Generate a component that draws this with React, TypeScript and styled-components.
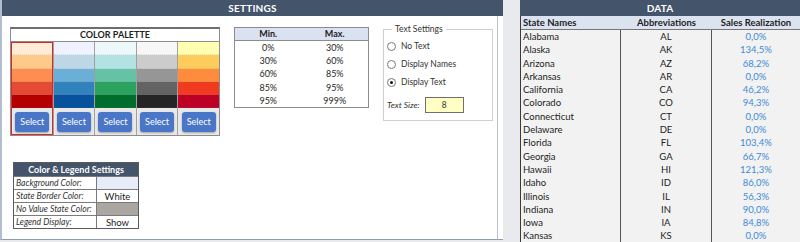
import React from 'react';
import styled, { createGlobalStyle } from 'styled-components';

const GlobalStyle = createGlobalStyle`
  html, body {
    margin: 0;
    padding: 0;
    background: #e8eaee;
    font-family: Lato, "Open Sans", sans-serif;
    color: #1e1e1e;
  }
`;

const Page = styled.div`
  display: flex;
  width: 800px;
  height: 242px;
  overflow: hidden;
`;

const SettingsPanel = styled.section`
  width: 503px;
  height: 240px;
  background: #fff;
  border-left: 2px solid #b3bdd0;
  border-bottom: 1px solid #8e9bb5;
  box-sizing: border-box;
  display: flex;
  flex-direction: column;
`;

const PanelHeader = styled.div`
  height: 16px;
  background: #44546a;
  color: #fff;
  font-weight: 700;
  font-size: 10px;
  line-height: 16px;
  text-align: center;
  letter-spacing: 0.2px;
`;

const SettingsBody = styled.div`
  flex: 1;
  border-right: 1px solid #b9c2d3;
  margin-right: 5px;
  display: flex;
  flex-direction: column;
  padding: 13px 0 0 8px;
  gap: 26px;
`;

const TopRow = styled.div`
  display: flex;
  align-items: flex-start;
`;

const PaletteTable = styled.div`
  width: 208px;
  border: 1px solid #8c8c8c;
  border-top: 2px solid #6e6e6e;
  display: grid;
  grid-template-columns: repeat(5, 1fr);
  margin-top: -2px;
`;

const PaletteTitle = styled.div`
  grid-column: 1 / -1;
  height: 12px;
  line-height: 12px;
  font-size: 9px;
  font-weight: 700;
  text-align: center;
  border-bottom: 1px solid #8c8c8c;
`;

const PaletteColumn = styled.div<{ $selected?: boolean }>`
  display: flex;
  flex-direction: column;
  border-left: 1px solid #a0a0a0;
  outline: ${p => (p.$selected ? '1.5px solid #d9262b' : 'none')};
  outline-offset: -1px;
  position: relative;
  z-index: ${p => (p.$selected ? 1 : 0)};
  &:first-child {
    border-left: none;
  }
`;

const Swatch = styled.div<{ $color: string }>`
  height: 13.3px;
  background: ${p => p.$color};
  border-bottom: 1px dotted rgba(120, 120, 120, 0.2);
  box-sizing: border-box;
`;

const ButtonCell = styled.div`
  height: 27px;
  background: #e9e9e9;
  display: flex;
  align-items: center;
  justify-content: center;
`;

const SelectButton = styled.button`
  width: 34px;
  height: 20px;
  border: none;
  border-radius: 3px;
  background: #4a76c8;
  color: #fff;
  font-family: Lato, sans-serif;
  font-size: 9px;
  padding: 0;
  box-shadow: 0 1px 2px rgba(0, 0, 0, 0.3);
`;

const RangeTable = styled.div`
  margin-left: 14px;
  width: 133px;
  border: 1px solid #8c8c8c;
  display: grid;
  grid-template-columns: 1fr 1fr;
  margin-top: -2px;
`;

const RangeHead = styled.div`
  height: 12px;
  line-height: 12px;
  background: #dae2f1;
  font-size: 9px;
  font-weight: 700;
  text-align: center;
  border-bottom: 1px solid #8c8c8c;
`;

const RangeCell = styled.div`
  height: 13.2px;
  line-height: 13.2px;
  font-size: 9px;
  text-align: center;
`;

const TextSettings = styled.fieldset`
  margin: -5px 0 0 14px;
  width: 110px;
  height: 97px;
  box-sizing: border-box;
  border: 1px solid #cfcfcf;
  padding: 3px 0 0 3px;
  display: flex;
  flex-direction: column;
  font-size: 8.5px;
  color: #333;
`;

const Legend = styled.legend`
  padding: 0 3px;
  margin-left: 5px;
  font-size: 8.5px;
`;

const RadioRow = styled.label`
  display: flex;
  align-items: center;
  gap: 5px;
  height: 18px;
`;

const Radio = styled.span<{ $checked?: boolean }>`
  width: 7px;
  height: 7px;
  border-radius: 50%;
  border: 1px solid #777;
  background: #fff;
  display: flex;
  align-items: center;
  justify-content: center;
  &::after {
    content: '';
    width: 3px;
    height: 3px;
    border-radius: 50%;
    background: ${p => (p.$checked ? '#111' : 'transparent')};
  }
`;

const SizeRow = styled.div`
  display: flex;
  align-items: center;
  gap: 5px;
  margin-top: 6px;
  font-style: italic;
`;

const SizeBox = styled.div`
  width: 37px;
  height: 14px;
  background: #ffffc4;
  border: 1px solid #6f6f6f;
  font-style: normal;
  text-align: center;
  line-height: 14px;
`;

const LegendTable = styled.div`
  width: 124px;
  margin-left: 3px;
  border: 1px solid #5a5a5a;
  display: grid;
  grid-template-columns: 83px 1fr;
  font-size: 9px;
`;

const LegendHead = styled.div`
  grid-column: 1 / -1;
  height: 13px;
  line-height: 13px;
  background: #44546a;
  color: #fff;
  font-weight: 700;
  text-align: center;
`;

const LegendLabel = styled.div`
  height: 13px;
  line-height: 13px;
  font-size: 8.6px;
  font-style: italic;
  color: #333;
  padding-left: 2px;
  border-top: 1px solid #7a7a7a;
  border-right: 1px solid #7a7a7a;
  box-sizing: border-box;
  white-space: nowrap;
`;

const LegendValue = styled.div<{ $bg?: string }>`
  height: 13px;
  line-height: 13px;
  text-align: center;
  background: ${p => p.$bg || '#fff'};
  border-top: 1px solid #7a7a7a;
  box-sizing: border-box;
  font-size: 9.5px;
`;

const DataPanel = styled.section`
  margin-left: 17px;
  width: 280px;
  display: flex;
  flex-direction: column;
  background: #f2f2f2;
`;

const DataGrid = styled.div`
  display: grid;
  grid-template-columns: 100px 91px 1fr;
  border-left: 1px solid #3a3a3a;
  font-size: 9.5px;
`;

const DataHead = styled.div<{ $align?: string }>`
  height: 13px;
  line-height: 13px;
  background: #dce3f0;
  font-weight: 700;
  text-align: ${p => p.$align || 'center'};
  padding-left: ${p => (p.$align === 'left' ? '2px' : '0')};
  border-bottom: 1px solid #777;
`;

const DataCell = styled.div<{ $kind: 'name' | 'abbr' | 'value' }>`
  height: 13.3px;
  line-height: 13.3px;
  padding-left: ${p => (p.$kind === 'name' ? '2px' : '0')};
  text-align: ${p => (p.$kind === 'name' ? 'left' : 'center')};
  color: ${p => (p.$kind === 'value' ? '#3d8ad6' : '#222')};
  border-right: ${p => (p.$kind === 'value' ? 'none' : '1px solid #555')};
`;

const palettes = [
  ['#ffecd6', '#ffc98a', '#ff8c50', '#e44b35', '#b40000'],
  ['#eff3ff', '#bdd7e7', '#6baed6', '#3182bd', '#08519c'],
  ['#edf8fb', '#b2e2e2', '#66c2a4', '#2ca25f', '#006d2c'],
  ['#f7f7f7', '#cccccc', '#969696', '#636363', '#252525'],
  ['#ffffb2', '#fecc5c', '#fd8d3c', '#f03b20', '#bd0026'],
];

const ranges = [
  ['0%', '30%'],
  ['30%', '60%'],
  ['60%', '85%'],
  ['85%', '95%'],
  ['95%', '999%'],
];

const states = [
  ['Alabama', 'AL', '0,0%'],
  ['Alaska', 'AK', '134,5%'],
  ['Arizona', 'AZ', '68,2%'],
  ['Arkansas', 'AR', '0,0%'],
  ['California', 'CA', '46,2%'],
  ['Colorado', 'CO', '94,3%'],
  ['Connecticut', 'CT', '0,0%'],
  ['Delaware', 'DE', '0,0%'],
  ['Florida', 'FL', '103,4%'],
  ['Georgia', 'GA', '66,7%'],
  ['Hawaii', 'HI', '121,3%'],
  ['Idaho', 'ID', '86,0%'],
  ['Illinois', 'IL', '56,3%'],
  ['Indiana', 'IN', '90,0%'],
  ['Iowa', 'IA', '84,8%'],
  ['Kansas', 'KS', '0,0%'],
];

export default function App() {
  return (
    <>
      <GlobalStyle />
      <Page>
        <SettingsPanel>
          <PanelHeader>SETTINGS</PanelHeader>
          <SettingsBody>
            <TopRow>
              <PaletteTable>
                <PaletteTitle>COLOR PALETTE</PaletteTitle>
                {palettes.map((colors, i) => (
                  <PaletteColumn key={i} $selected={i === 0}>
                    {colors.map(c => (
                      <Swatch key={c} $color={c} />
                    ))}
                    <ButtonCell>
                      <SelectButton>Select</SelectButton>
                    </ButtonCell>
                  </PaletteColumn>
                ))}
              </PaletteTable>

              <RangeTable>
                <RangeHead>Min.</RangeHead>
                <RangeHead>Max.</RangeHead>
                {ranges.map(([min, max]) => (
                  <React.Fragment key={min}>
                    <RangeCell>{min}</RangeCell>
                    <RangeCell>{max}</RangeCell>
                  </React.Fragment>
                ))}
              </RangeTable>

              <TextSettings>
                <Legend>Text Settings</Legend>
                <RadioRow><Radio />No Text</RadioRow>
                <RadioRow><Radio />Display Names</RadioRow>
                <RadioRow><Radio $checked />Display Text</RadioRow>
                <SizeRow>
                  Text Size:
                  <SizeBox>8</SizeBox>
                </SizeRow>
              </TextSettings>
            </TopRow>

            <LegendTable>
              <LegendHead>Color &amp; Legend Settings</LegendHead>
              <LegendLabel>Background Color:</LegendLabel>
              <LegendValue $bg="#e6ecf8" />
              <LegendLabel>State Border Color:</LegendLabel>
              <LegendValue>White</LegendValue>
              <LegendLabel>No Value State Color:</LegendLabel>
              <LegendValue $bg="#aaa7a3" />
              <LegendLabel>Legend Display:</LegendLabel>
              <LegendValue>Show</LegendValue>
            </LegendTable>
          </SettingsBody>
        </SettingsPanel>

        <DataPanel>
          <PanelHeader>DATA</PanelHeader>
          <DataGrid>
            <DataHead $align="left">State Names</DataHead>
            <DataHead>Abbreviations</DataHead>
            <DataHead>Sales Realization</DataHead>
            {states.map(([name, abbr, value]) => (
              <React.Fragment key={abbr}>
                <DataCell $kind="name">{name}</DataCell>
                <DataCell $kind="abbr">{abbr}</DataCell>
                <DataCell $kind="value">{value}</DataCell>
              </React.Fragment>
            ))}
          </DataGrid>
        </DataPanel>
      </Page>
    </>
  );
}
